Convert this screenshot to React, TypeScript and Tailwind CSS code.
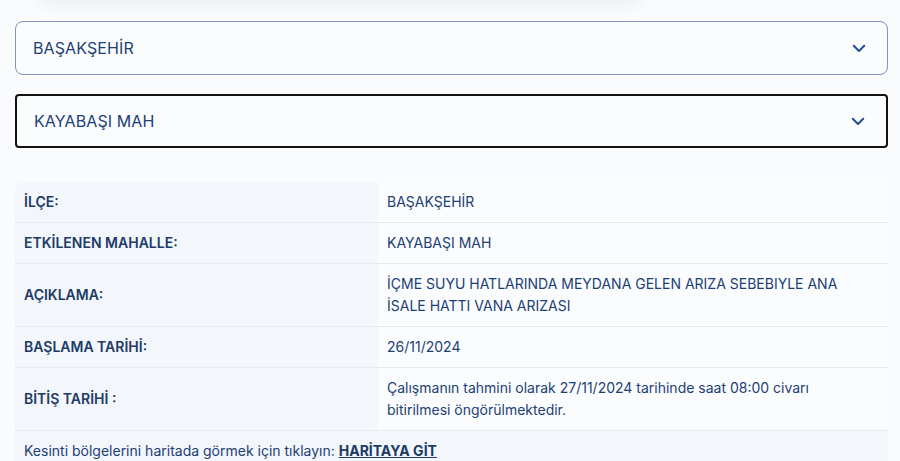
import React from "react";

const rows: { label: string; value: React.ReactNode }[] = [
  { label: "İLÇE:", value: "BAŞAKŞEHİR" },
  { label: "ETKİLENEN MAHALLE:", value: "KAYABAŞI MAH" },
  {
    label: "AÇIKLAMA:",
    value: (
      <>
        İÇME SUYU HATLARINDA MEYDANA GELEN ARIZA SEBEBIYLE ANA
        <br />
        İSALE HATTI VANA ARIZASI
      </>
    ),
  },
  { label: "BAŞLAMA TARİHİ:", value: "26/11/2024" },
  {
    label: "BİTİŞ TARİHİ :",
    value: (
      <>
        Çalışmanın tahmini olarak 27/11/2024 tarihinde saat 08:00 civarı
        <br />
        bitirilmesi öngörülmektedir.
      </>
    ),
  },
];

function Chevron() {
  return (
    <svg width="18" height="18" viewBox="0 0 24 24" fill="none" stroke="#1d4f91" strokeWidth="2.6" strokeLinecap="round" strokeLinejoin="round">
      <path d="M5 9l7 7 7-7" />
    </svg>
  );
}

function SelectBox({ text, focused }: { text: string; focused?: boolean }) {
  return (
    <div
      className={`flex h-[54px] items-center justify-between pl-[17px] pr-[19px] bg-[#fbfcfe] ${
        focused ? "border-2 border-[#111] rounded-[4px]" : "border border-[#7d95c0] rounded-[8px]"
      }`}
    >
      <span className="text-[16px] text-[#1d4075] tracking-[0.1px]">{text}</span>
      <Chevron />
    </div>
  );
}

export default function App() {
  return (
    <div
      className="w-[900px] h-[461px] overflow-hidden bg-[#fafbfd] relative"
      style={{ fontFamily: "Inter, 'Noto Sans', sans-serif" }}
    >
      {/* card shadow from above */}
      <div className="absolute -top-[30px] left-[40px] w-[600px] h-[30px] rounded-b-xl shadow-[0_4px_18px_rgba(30,50,90,0.08)] bg-[#fafbfd]" />

      <div className="ml-[15px] mr-[12px] pt-[21px] flex flex-col gap-[19px]">
        <SelectBox text="BAŞAKŞEHİR" />
        <SelectBox text="KAYABAŞI MAH" focused />
      </div>

      <div className="mt-[34px] ml-[15px] mr-[12px] rounded-tl-[8px] overflow-hidden text-[14px] leading-[22px]">
        {rows.map((r) => (
          <div key={r.label} className="grid grid-cols-[363px_1fr] border-b border-[#e6e9ef]">
            <div className="bg-[#f3f6fb] pl-[9px] py-[9px] flex items-center font-semibold text-[#203a66]">
              {r.label}
            </div>
            <div className="bg-[#fafcfe] pl-[9px] py-[9px] text-[#1d4075]">{r.value}</div>
          </div>
        ))}
        <div className="bg-[#f3f6fb] pl-[9px] pt-[9px] pb-[10px] text-[#1d4075]">
          Kesinti bölgelerini haritada görmek için tıklayın:{" "}
          <a className="font-bold underline text-[#203a66]" href="#">
            HARİTAYA GİT
          </a>
        </div>
      </div>
    </div>
  );
}
